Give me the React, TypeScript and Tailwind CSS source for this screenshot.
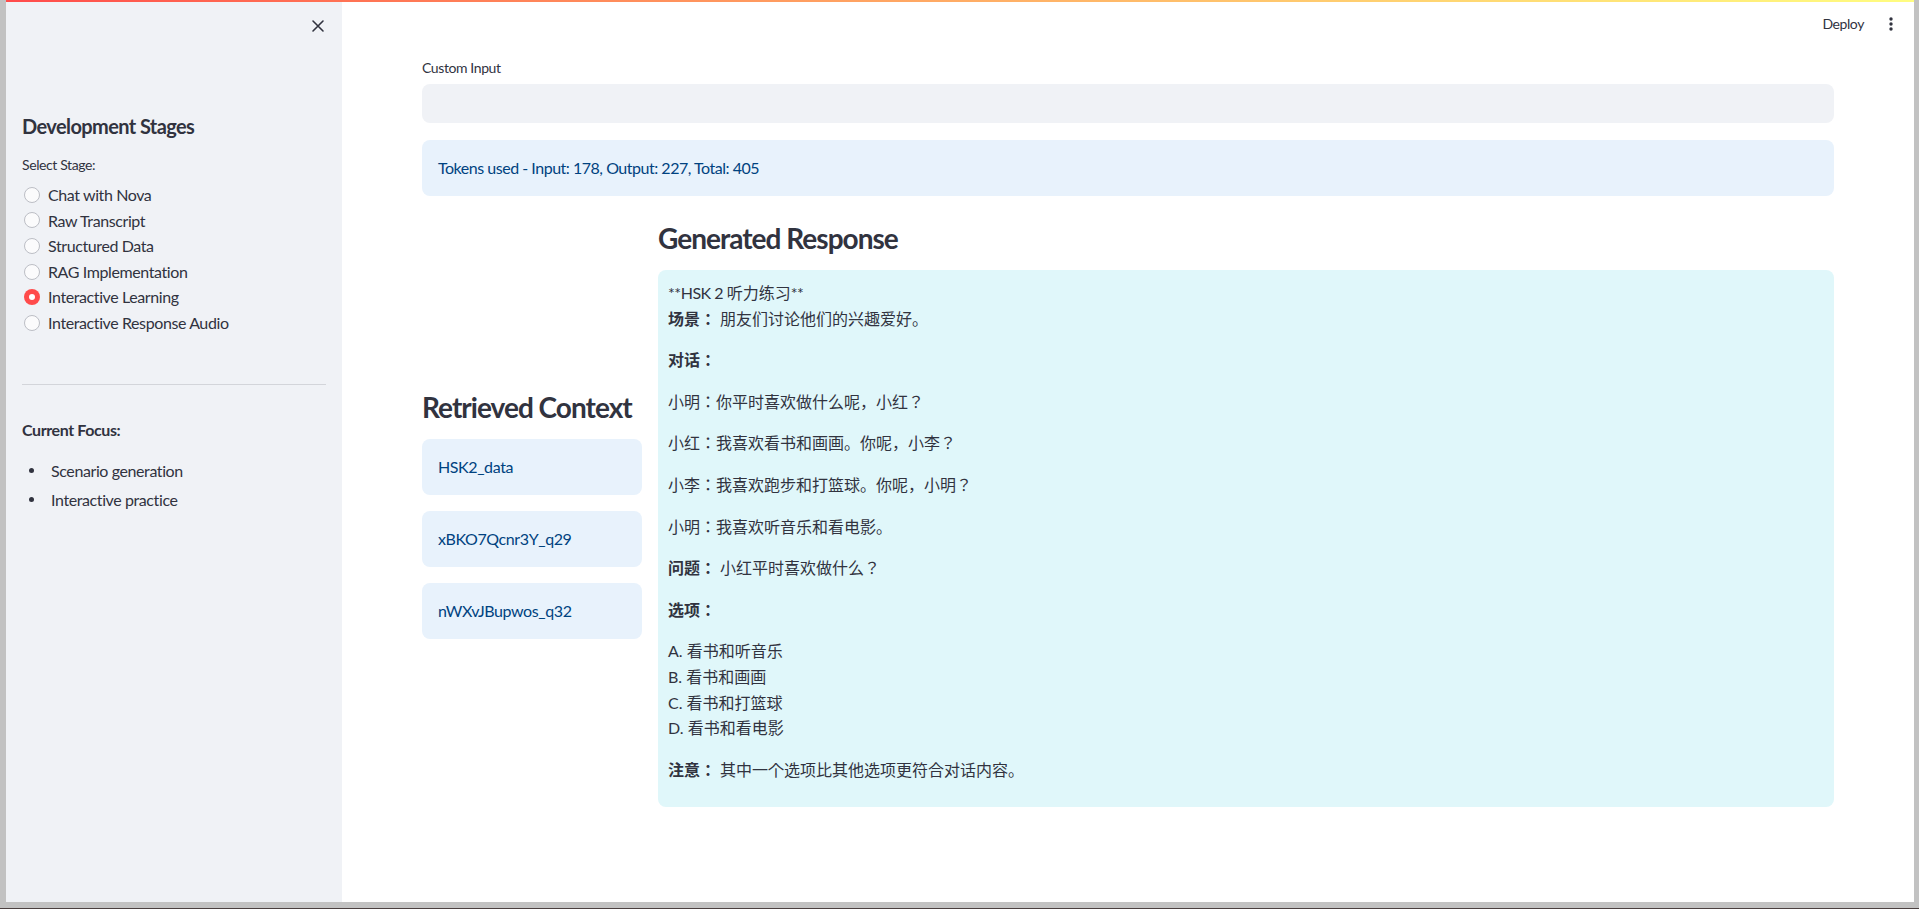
import React from "react";

const stages = [
  "Chat with Nova",
  "Raw Transcript",
  "Structured Data",
  "RAG Implementation",
  "Interactive Learning",
  "Interactive Response Audio",
];

function Radio({ label, checked }: { label: string; checked?: boolean }) {
  return (
    <div className="flex items-center h-[25.6px]">
      {checked ? (
        <span className="ml-[2px] w-4 h-4 rounded-full bg-[#ff4b4b] flex items-center justify-center shrink-0">
          <span className="w-[6px] h-[6px] rounded-full bg-white" />
        </span>
      ) : (
        <span className="ml-[2px] w-4 h-4 rounded-full bg-[#fbfbfc] border border-[#bcbec5] shrink-0" />
      )}
      <span className="ml-2 text-base leading-[25.6px]">{label}</span>
    </div>
  );
}

function P({ children }: { children: React.ReactNode }) {
  return <p className="mb-4 leading-[25.6px]">{children}</p>;
}

export default function App() {
  return (
    <div className="w-[1919px] h-[909px] bg-[#c2c2c2] pl-[6px] pr-[5px] pb-[6px] border-b border-[#4a3f3f] overflow-hidden font-['Lato','Noto_Sans_CJK_JP',sans-serif] text-[#31333f] tracking-[-0.025em]">
      <div className="relative flex h-[902px] w-[1908px]">
        <div className="absolute top-0 left-0 right-0 h-[2px] bg-linear-to-r from-[#ff4b4b] to-[#fffd80] z-10" />

        {/* Sidebar */}
        <aside className="w-[336px] shrink-0 bg-[#f0f2f6] flex flex-col">
          <div className="h-[52px] flex items-center justify-end pr-[17px]">
            <svg width="14" height="14" viewBox="0 0 14 14" fill="none" stroke="#31333f" strokeWidth="1.6" strokeLinecap="round">
              <path d="M2 2 L12 12 M12 2 L2 12" />
            </svg>
          </div>
          <div className="px-4">
            <h2 className="mt-[62px] text-[20px] leading-6 font-bold tracking-[-0.03em]">Development Stages</h2>
            <div className="mt-[17px] text-sm leading-5">Select Stage:</div>
            <div className="mt-[7px] flex flex-col">
              {stages.map((s) => (
                <Radio key={s} label={s} checked={s === "Interactive Learning"} />
              ))}
            </div>
            <div className="mt-[48px] h-px bg-[#d3d5da]" />
            <div className="mt-[32px] text-base leading-[25.6px] font-bold">Current Focus:</div>
            <ul className="mt-4 flex flex-col gap-[3.2px]">
              {["Scenario generation", "Interactive practice"].map((t) => (
                <li key={t} className="flex items-center h-[25.6px]">
                  <span className="ml-[7px] w-[5px] h-[5px] rounded-full bg-[#31333f] shrink-0" />
                  <span className="ml-[17px] text-base leading-[25.6px]">{t}</span>
                </li>
              ))}
            </ul>
          </div>
        </aside>

        {/* Main */}
        <main className="relative flex-1 bg-white pl-[80px] pr-[80px] pt-[58px]">
          <div className="absolute top-0 right-0 h-[48px] flex items-center pr-[20px]">
            <span className="text-sm">Deploy</span>
            <svg className="ml-[24px]" width="6" height="18" viewBox="0 0 6 18" fill="#31333f">
              <circle cx="3" cy="4" r="1.7" />
              <circle cx="3" cy="9" r="1.7" />
              <circle cx="3" cy="14" r="1.7" />
            </svg>
          </div>

          <div className="text-sm leading-5">Custom Input</div>
          <div className="mt-[6px] h-[39px] rounded-lg bg-[#f0f2f6]" />
          <div className="mt-[17px] h-[56px] rounded-lg bg-[#e8f2fc] pl-4 flex items-center text-[#004280] text-base tracking-[-0.03em]">
            Tokens used - Input: 178, Output: 227, Total: 405
          </div>

          <div className="mt-4 flex items-center gap-4">
            <div className="w-[220px] shrink-0 pt-[6px] flex flex-col">
              <h3 className="text-[28px] leading-[42px] font-bold whitespace-nowrap tracking-[-0.035em]">Retrieved Context</h3>
              <div className="mt-[11px] flex flex-col gap-4">
                {["HSK2_data", "xBKO7Qcnr3Y_q29", "nWXvJBupwos_q32"].map((t) => (
                  <div key={t} className="h-[56px] rounded-lg bg-[#e8f2fc] px-4 flex items-center text-[#004280] text-base">
                    {t}
                  </div>
                ))}
              </div>
            </div>
            <div className="flex-1 flex flex-col">
              <h3 className="mt-[5px] text-[28px] leading-[42px] font-bold tracking-[-0.035em]">Generated Response</h3>
              <div className="mt-[11px] rounded-lg bg-[#e0f7fa] pt-[10px] pb-[9px] px-[10px] text-base tracking-normal">
                <P>
                  <span className="tracking-[-0.03em]">**HSK 2 </span>听力练习<span className="tracking-[-0.03em]">**</span>
                  <br />
                  <b>场景：</b> 朋友们讨论他们的兴趣爱好。
                </P>
                <P>
                  <b>对话：</b>
                </P>
                <P>小明：你平时喜欢做什么呢，小红？</P>
                <P>小红：我喜欢看书和画画。你呢，小李？</P>
                <P>小李：我喜欢跑步和打篮球。你呢，小明？</P>
                <P>小明：我喜欢听音乐和看电影。</P>
                <P>
                  <b>问题：</b> 小红平时喜欢做什么？
                </P>
                <P>
                  <b>选项：</b>
                </P>
                <P>
                  A. 看书和听音乐
                  <br />
                  B. 看书和画画
                  <br />
                  C. 看书和打篮球
                  <br />
                  D. 看书和看电影
                </P>
                <P>
                  <b>注意：</b> 其中一个选项比其他选项更符合对话内容。
                </P>
              </div>
            </div>
          </div>
        </main>
      </div>
    </div>
  );
}
